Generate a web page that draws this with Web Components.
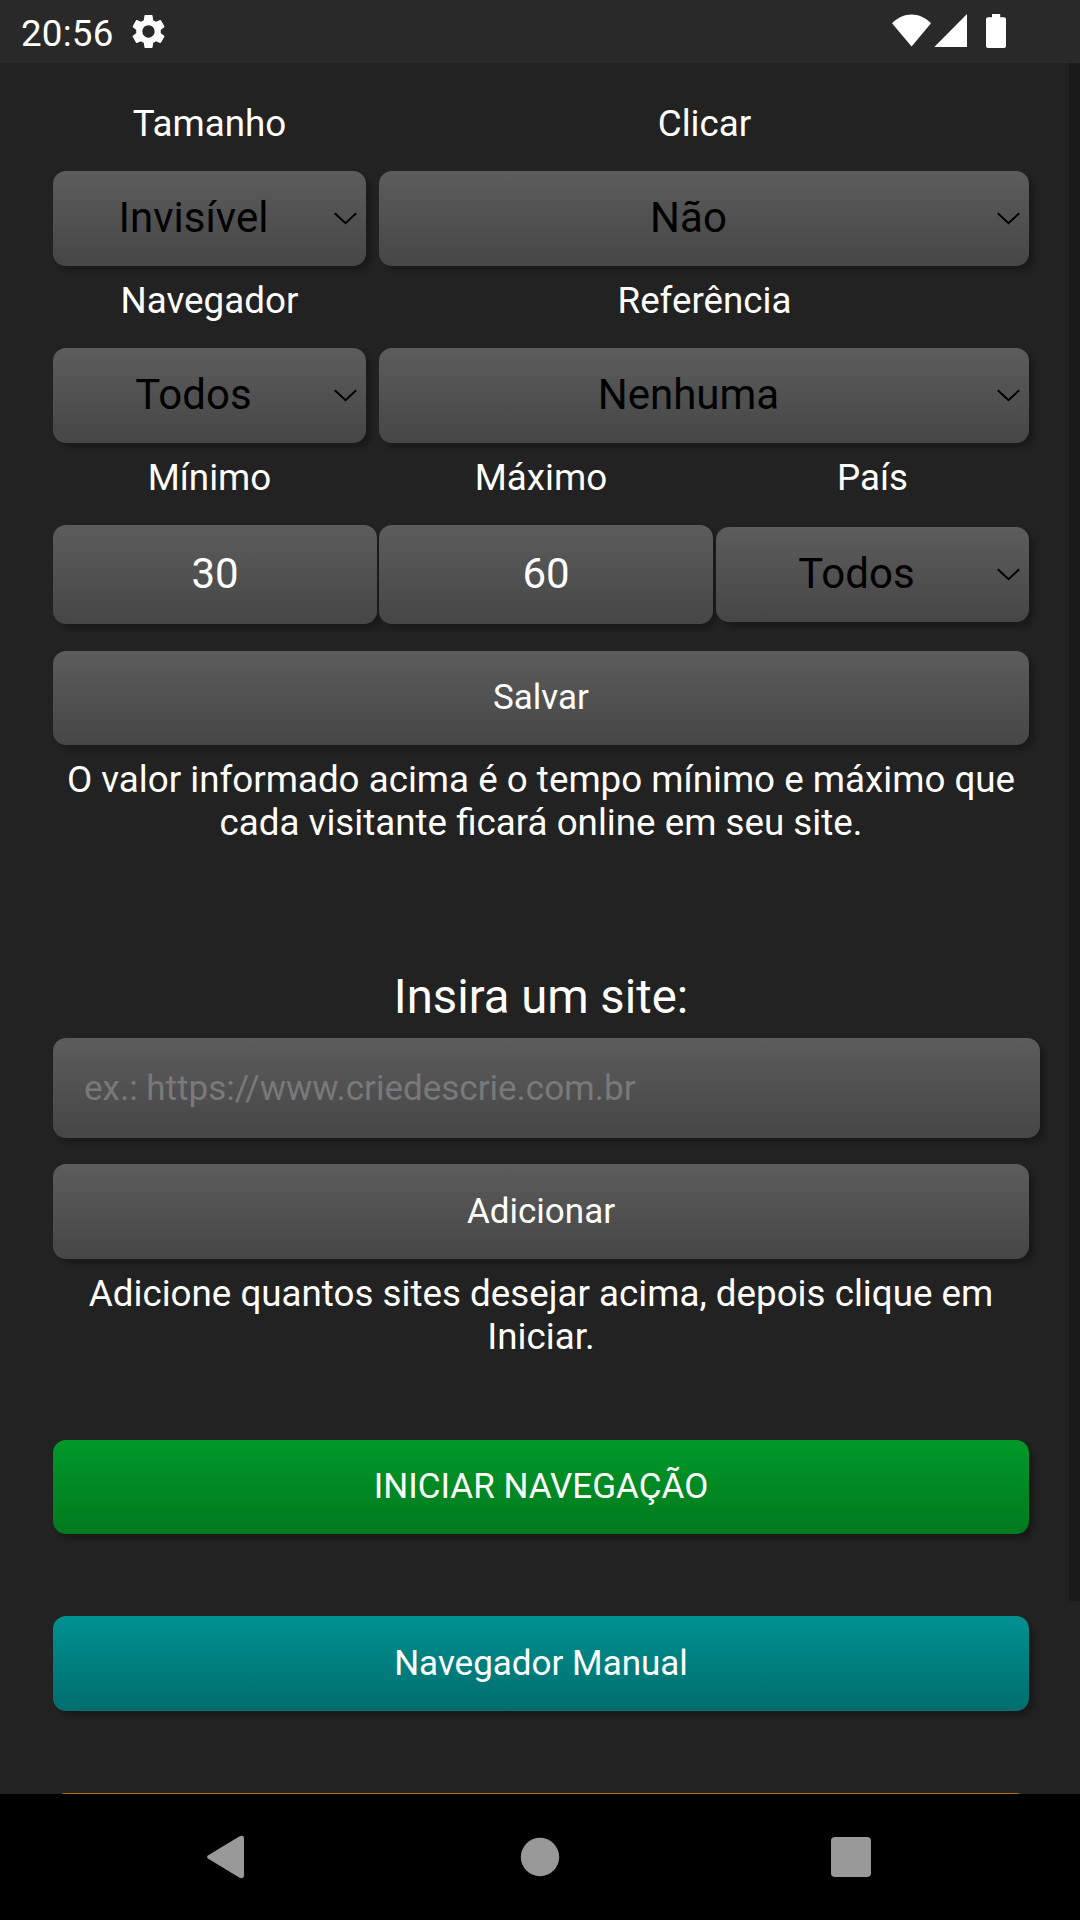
<!DOCTYPE html>
<html lang="pt-BR">
<head>
<meta charset="utf-8">
<title>Navegador</title>
<style>
html,body{margin:0;height:100%;background:#222;overflow:hidden}
</style>
</head>
<body>
<app-screen></app-screen>
<script>
const define=(name,html)=>{
  const t=document.createElement('template');
  t.innerHTML=html;
  customElements.define(name,class extends HTMLElement{
    constructor(){
      super();
      this.attachShadow({mode:'open'}).append(t.content.cloneNode(true));
    }
  });
};

define('status-bar',`
<style>
:host{display:flex;align-items:flex-start;height:63px;box-sizing:border-box;background:#292929;color:#fff;padding:0 74px 0 21px;font-size:36.75px;line-height:43px}
.clock{padding-top:12px;letter-spacing:.2px}
svg{display:block;fill:#fff}
.gear{margin:11px 0 0 14px}
.right{margin:13px 0 0 auto}
</style>
<span class="clock">20:56</span>
<svg class="gear" width="41" height="41" viewBox="0 0 24 24"><path d="M19.14 12.94c.04-.3.06-.61.06-.94 0-.32-.02-.64-.07-.94l2.03-1.58c.18-.14.23-.41.12-.61l-1.92-3.32c-.12-.22-.37-.29-.59-.22l-2.39.96c-.5-.38-1.03-.7-1.62-.94l-.36-2.54c-.04-.24-.24-.41-.48-.41h-3.84c-.24 0-.43.17-.47.41l-.36 2.54c-.59.24-1.13.57-1.62.94l-2.39-.96c-.22-.08-.47 0-.59.22L2.74 8.87c-.12.21-.08.47.12.61l2.03 1.58c-.05.3-.09.63-.09.94s.02.64.07.94l-2.03 1.58c-.18.14-.23.41-.12.61l1.92 3.32c.12.22.37.29.59.22l2.39-.96c.5.38 1.03.7 1.62.94l.36 2.54c.05.24.24.41.48.41h3.84c.24 0 .44-.17.47-.41l.36-2.54c.59-.24 1.13-.56 1.62-.94l2.39.96c.22.08.47 0 .59-.22l1.92-3.32c.12-.22.07-.47-.12-.61l-2.01-1.58zM12 15.6c-1.98 0-3.6-1.62-3.6-3.6s1.62-3.6 3.6-3.6 3.6 1.62 3.6 3.6-1.62 3.6-3.6 3.6z"/></svg>
<svg class="right" width="114" height="36" viewBox="892 13 114 36">
<path d="M892 23.2C903 11.6 920 11.6 931 23.2L911.6 46.6Z"/>
<path d="M934.3 47H967V14Z"/>
<path d="M992 14h8.200v3.200h3.800q2 0 2 2V46q0 2-2 2H988q-2 0-2-2V19.200q0-2 2-2h4Z"/>
</svg>`);

define('form-grid',`
<style>
:host{display:grid;grid-template-columns:313px 324px 313px;column-gap:13px;justify-items:stretch}
</style><slot></slot>`);

define('field-cell',`
<style>
:host{display:flex;flex-direction:column;height:177px}
:host([wide]){grid-column:span 2;--nudge:1px}
.label{height:43px;margin-bottom:26px;padding-left:var(--nudge,0);text-align:center;font-size:36.75px;line-height:43px}
.control{display:flex;flex-direction:column;height:99px}
:host([centered]) .control{justify-content:center}
</style>
<div class="label"><slot name="label"></slot></div>
<div class="control"><slot></slot></div>`);

define('select-box',`
<style>
:host{display:flex;align-items:center;height:95px;box-sizing:border-box;padding:0 9px 0 0;border-radius:13px;background:linear-gradient(#5c5c5c,#464646);box-shadow:5px 5px 5px rgba(0,0,0,.25);color:#000;font-size:42px;line-height:49px}
span{flex:1;text-align:center;padding:0 0 2px var(--nudge,0)}
svg{display:block;margin-top:-1px}
</style>
<span><slot></slot></span>
<svg width="23" height="13" viewBox="0 0 23 13" fill="none" stroke="#000" stroke-width="2"><path d="M.8 1.200L11.500 11.200L22.200 1.200"/></svg>`);

define('text-box',`
<style>
:host{display:flex;align-items:center;justify-content:center;height:99px;box-sizing:border-box;padding-bottom:2px;border-radius:13px;background:linear-gradient(#5c5c5c,#464646);box-shadow:5px 5px 5px rgba(0,0,0,.25);color:#fff;font-size:42px;line-height:49px;flex:none}
:host([placeholder]){height:100px;justify-content:flex-start;padding:0 0 0 31px;color:#797979;font-size:35px;line-height:41px}
</style><slot></slot>`);

define('push-button',`
<style>
:host{display:block;height:95px;border-radius:13px;background:linear-gradient(var(--from,#5c5c5c),var(--to,#464646));box-shadow:5px 5px 5px rgba(0,0,0,.25)}
button{all:unset;display:flex;align-items:center;justify-content:center;width:100%;height:100%;box-sizing:border-box;padding-bottom:var(--lift,0);color:#fff;font-size:35px;line-height:41px}
</style><button><slot></slot></button>`);

define('help-text',`
<style>:host{display:block;text-align:center;font-size:36.75px;line-height:43px}</style><slot></slot>`);

define('nav-bar',`
<style>
:host{display:flex;align-items:center;height:126px;box-sizing:border-box;padding-left:207px;background:#000}
svg{display:block;fill:#999}
</style>
<svg width="37" height="44" viewBox="0 0 37 44"><path d="M1.300 20.200L32.600 1.300Q37 -.2 37 3.500V40.500Q37 44.200 32.600 42.700L1.300 23.800Q-1.100 22 1.300 20.200Z"/></svg>
<svg style="margin-left:276px" width="40" height="40"><circle cx="20" cy="20" r="19.200"/></svg>
<svg style="margin-left:271px" width="40" height="40"><rect width="40" height="40" rx="4"/></svg>`);

define('app-screen',`
<style>
:host{display:flex;flex-direction:column;width:1080px;height:1920px;background:#222;color:#fff;font-family:Roboto,sans-serif}
main{display:flex;height:1731px;overflow:hidden}
.page{flex:1;box-sizing:border-box;padding:39px 40px 0 53px;min-width:0}
.bar{width:11px;height:1538px;background:#1a1a1a}
.save{--lift:2px;height:94px;margin-top:18px}
help-text{margin-top:13px}
h2{margin:125px 0 0;font-size:47.25px;font-weight:400;line-height:56px;text-align:center}
.url{margin:13px -11px 26px 0}
.start{--lift:2px;--from:#009929;--to:#007a1e;height:94px;margin-top:82px}
.manual{--from:#009191;--to:#006d6d;margin:82px 0}
.next{--from:#b0701c;--to:#8a5200}
</style>
<status-bar></status-bar>
<main>
<div class="page">
<form-grid>
<field-cell><span slot="label">Tamanho</span><select-box>Invisível</select-box></field-cell>
<field-cell wide><span slot="label">Clicar</span><select-box>Não</select-box></field-cell>
<field-cell><span slot="label">Navegador</span><select-box>Todos</select-box></field-cell>
<field-cell wide><span slot="label">Referência</span><select-box>Nenhuma</select-box></field-cell>
<field-cell><span slot="label">Mínimo</span><text-box style="margin-right:-11px">30</text-box></field-cell>
<field-cell><span slot="label">Máximo</span><text-box style="margin-right:-10px">60</text-box></field-cell>
<field-cell centered><span slot="label">País</span><select-box>Todos</select-box></field-cell>
</form-grid>
<push-button class="save">Salvar</push-button>
<help-text>O valor informado acima é o tempo mínimo e máximo que cada visitante ficará online em seu site.</help-text>
<h2>Insira um site:</h2>
<text-box class="url" placeholder>ex.: https://www.criedescrie.com.br</text-box>
<push-button>Adicionar</push-button>
<help-text>Adicione quantos sites desejar acima, depois clique em Iniciar.</help-text>
<push-button class="start">INICIAR NAVEGAÇÃO</push-button>
<push-button class="manual">Navegador Manual</push-button>
<push-button class="next"></push-button>
</div>
<div class="bar"></div>
</main>
<nav-bar></nav-bar>`);
</script>
</body>
</html>
